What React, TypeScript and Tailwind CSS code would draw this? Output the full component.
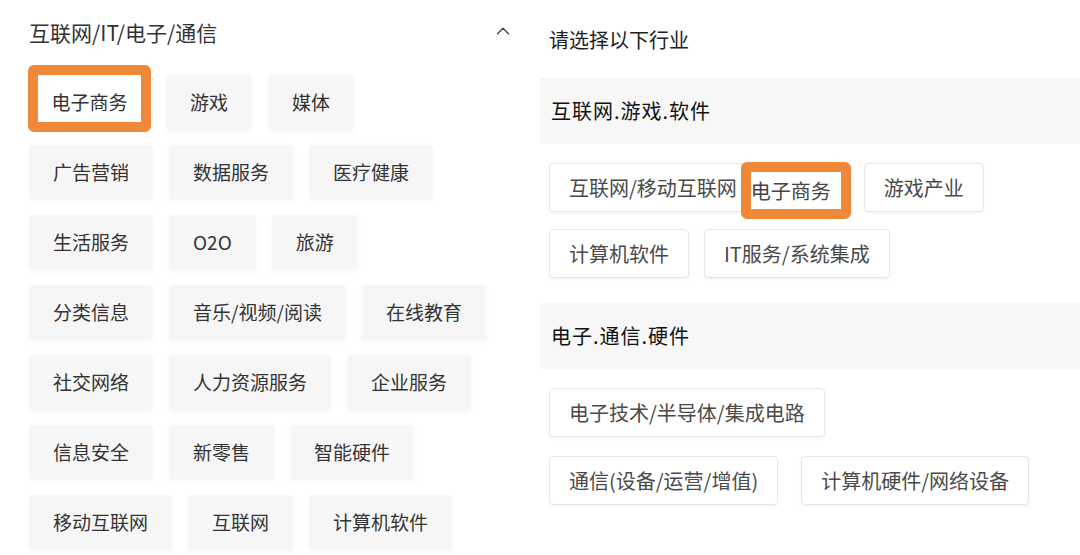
import React from "react";
import { ChevronUp } from "lucide-react";

const FONT = { fontFamily: '"Noto Sans CJK SC", "Noto Sans", sans-serif' };

// left panel rows, first tag of first row is the highlighted one
const leftRows: string[][] = [
  ["电子商务", "游戏", "媒体"],
  ["广告营销", "数据服务", "医疗健康"],
  ["生活服务", "O2O", "旅游"],
  ["分类信息", "音乐/视频/阅读", "在线教育"],
  ["社交网络", "人力资源服务", "企业服务"],
  ["信息安全", "新零售", "智能硬件"],
  ["移动互联网", "互联网", "计算机软件"],
];

const LeftTag = ({ label }: { label: string }) => (
  <div className="h-[55px] px-6 flex items-center bg-[#f6f6f6] rounded-sm text-[19px] text-[#333] shadow-[0_2px_6px_rgba(0,0,0,0.03)] whitespace-nowrap">
    {label}
  </div>
);

const Highlight = ({ label, className }: { label: string; className?: string }) => (
  <div
    className={
      "flex items-center bg-white border-[10px] border-[#f0883a] rounded-md whitespace-nowrap relative z-10 " +
      (className ?? "")
    }
  >
    {label}
  </div>
);

const RightTag = ({ label }: { label: string }) => (
  <div className="h-[49px] px-[19px] flex items-center bg-white border border-[#e6e6e6] rounded-sm text-[20px] text-[#4a4a4a] shadow-[0_2px_3px_rgba(0,0,0,0.04)] whitespace-nowrap">
    {label}
  </div>
);

const SectionTitle = ({ title }: { title: string }) => (
  <div className="h-[66px] pl-[11px] flex items-center bg-[#f7f7f7] text-[20px] text-[#111] tracking-[1px]">
    {title}
  </div>
);

export default function App() {
  return (
    <div className="w-[1080px] h-[555px] bg-white flex overflow-hidden" style={FONT}>
      {/* left: category picker */}
      <div className="w-[540px] pl-[29px] pr-[30px]">
        <div className="h-[66px] flex items-center justify-between">
          <span className="text-[21px] text-[#333]">互联网/IT/电子/通信</span>
          <ChevronUp size={22} strokeWidth={1.5} className="text-[#444] mr-[-4px] -mt-[4px]" />
        </div>
        <div className="mt-[9px] flex flex-col gap-[15px]">
          {leftRows.map((row, ri) => (
            <div key={ri} className="flex items-start gap-4 h-[55px]">
              {row.map((label, i) =>
                ri === 0 && i === 0 ? (
                  <Highlight
                    key={label}
                    label={label}
                    className="w-[123px] h-[67px] -mt-[10px] -mx-[1px] pt-[7px] justify-center text-[19px] text-[#333]"
                  />
                ) : (
                  <LeftTag key={label} label={label} />
                )
              )}
            </div>
          ))}
        </div>
      </div>

      {/* right: industry list */}
      <div className="w-[540px]">
        <div className="h-[78px] pl-[9px] pt-[2px] flex items-center text-[20px] text-[#222]">请选择以下行业</div>
        <SectionTitle title="互联网.游戏.软件" />
        <div className="pl-[9px] pt-[19px] flex flex-col gap-[17px]">
          <div className="flex items-start h-[49px]">
            <RightTag label="互联网/移动互联网" />
            <Highlight
              label="电子商务"
              className="-ml-[16px] -mt-[1px] h-[57px] pr-[10px] text-[20px] text-[#444]"
            />
            <div className="ml-[13px]">
              <RightTag label="游戏产业" />
            </div>
          </div>
          <div className="flex gap-[15px]">
            <RightTag label="计算机软件" />
            <RightTag label="IT服务/系统集成" />
          </div>
        </div>
        <div className="mt-[25px]">
          <SectionTitle title="电子.通信.硬件" />
        </div>
        <div className="pl-[9px] pt-[19px] flex flex-col gap-[19px]">
          <div className="flex gap-[15px]">
            <RightTag label="电子技术/半导体/集成电路" />
          </div>
          <div className="flex gap-[23px]">
            <RightTag label="通信(设备/运营/增值)" />
            <RightTag label="计算机硬件/网络设备" />
          </div>
        </div>
      </div>
    </div>
  );
}
